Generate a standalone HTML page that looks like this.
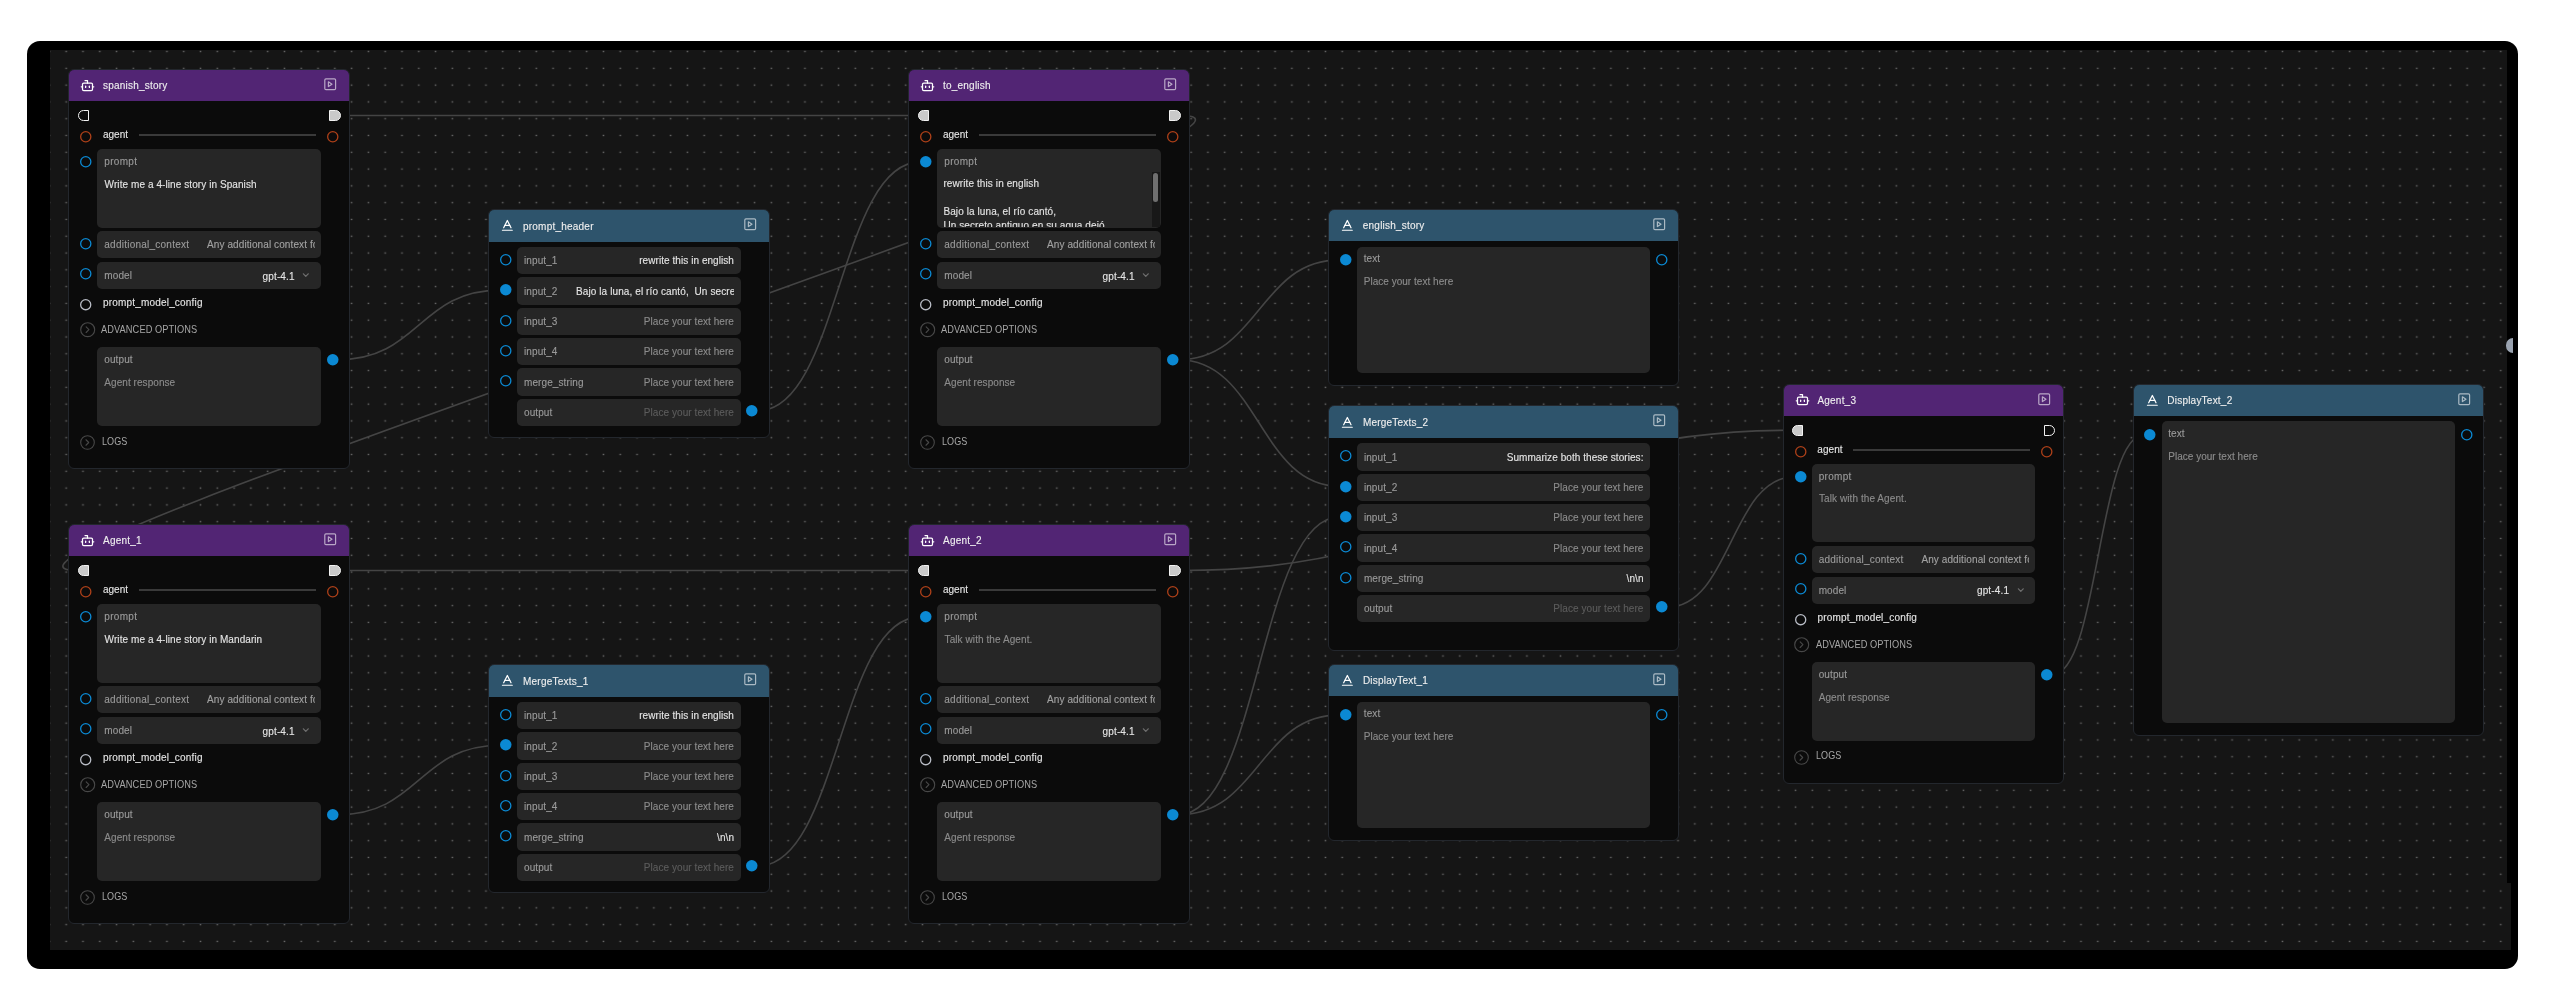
<!DOCTYPE html>
<html><head><meta charset="utf-8">
<style>
html,body{margin:0;padding:0;background:#ffffff;width:2563px;height:1000px;overflow:hidden;}
body{position:relative;font-family:"Liberation Sans", sans-serif;}
#wrap{position:absolute;left:0;top:0;width:2563px;height:1000px;will-change:transform;}
#frame{position:absolute;left:27px;top:41px;width:2491px;height:928px;background:#000;border-radius:13px;}
.t{position:absolute;white-space:nowrap;-webkit-text-stroke:0.12px currentColor;}
.hc{position:absolute;border-radius:50%;}
.bx{position:absolute;background:#262626;}
.ic{position:absolute;overflow:visible;}
.fh{position:absolute;border:1px solid #f2f2f2;}
.hd{position:absolute;border-radius:5px 5px 0 0;}
.nd{position:absolute;background:#0b0b0b;border:1px solid #23272d;border-radius:6px;}
.ln{position:absolute;background:#3a3a3a;}
.clip{position:absolute;overflow:hidden;}
.edges{position:absolute;left:0;top:0;}
</style></head><body><div id="wrap">
<div id="frame"></div>
<svg width="2563" height="1000" style="position:absolute;left:0;top:0">
<defs><pattern id="dots" patternUnits="userSpaceOnUse" width="16.79" height="16.79" x="41.0" y="43.2">
<rect x="7.6" y="7.7" width="1.6" height="1.3" fill="#6a6a6a"/></pattern></defs>
<rect x="50" y="50" width="2457" height="900" fill="#151515"/>
<rect x="2507" y="883" width="4" height="67" fill="#151515"/>
<rect x="50" y="50" width="2457" height="900" fill="url(#dots)"/>
<rect x="2507" y="883" width="4" height="67" fill="url(#dots)"/>
</svg>
<svg class="edges" width="2563" height="1000" viewBox="0 0 2563 1000">
<path d="M340.6,115.5 C629.2,115.5 629.1,115.5 917.7,115.5" fill="none" stroke="#444444" stroke-width="1.6"/>
<path d="M1180.6,115.5 C1356.7,115.5 -98.4,570.5 77.7,570.5" fill="none" stroke="#444444" stroke-width="1.6"/>
<path d="M338.2,359.7 C419.1,359.7 419.1,290.1 500.1,290.1" fill="none" stroke="#444444" stroke-width="1.6"/>
<path d="M757.8,410.9 C839.1,410.9 839.1,161.9 920.3,161.9" fill="none" stroke="#444444" stroke-width="1.6"/>
<path d="M1178.2,359.7 C1259.0,359.7 1259.0,259.9 1339.8,259.9" fill="none" stroke="#444444" stroke-width="1.6"/>
<path d="M1178.2,359.7 C1259.1,359.7 1259.1,486.4 1340.0,486.4" fill="none" stroke="#444444" stroke-width="1.6"/>
<path d="M340.6,570.5 C629.2,570.5 629.1,570.5 917.7,570.5" fill="none" stroke="#444444" stroke-width="1.6"/>
<path d="M1180.6,570.5 C1486.3,570.5 1486.3,430.3 1792.1,430.3" fill="none" stroke="#444444" stroke-width="1.6"/>
<path d="M338.2,814.7 C419.1,814.7 419.1,745.2 500.1,745.2" fill="none" stroke="#444444" stroke-width="1.6"/>
<path d="M757.8,866.0 C839.1,866.0 839.1,616.9 920.3,616.9" fill="none" stroke="#444444" stroke-width="1.6"/>
<path d="M1178.2,814.7 C1259.1,814.7 1259.1,516.7 1340.0,516.7" fill="none" stroke="#444444" stroke-width="1.6"/>
<path d="M1178.2,814.7 C1259.1,814.7 1259.1,714.9 1339.9,714.9" fill="none" stroke="#444444" stroke-width="1.6"/>
<path d="M1667.3,607.2 C1731.0,607.2 1731.0,476.7 1794.7,476.7" fill="none" stroke="#444444" stroke-width="1.6"/>
<path d="M2052.6,674.5 C2098.4,674.5 2098.4,434.5 2144.3,434.5" fill="none" stroke="#444444" stroke-width="1.6"/>
</svg>
<div class="nd" style="left:68.20px;top:68.80px;width:279.60px;height:398.10px;"></div>
<div class="hd" style="left:69.20px;top:69.80px;width:279.60px;height:31.30px;background:#522574;"></div>
<svg class="ic" style="left:80.30px;top:77.60px;" width="15" height="15" viewBox="0 0 24 24" fill="none" stroke="#ffffff" stroke-width="2" stroke-linecap="round" stroke-linejoin="round"><path d="M12 8V4H8"/><rect width="16" height="12" x="4" y="8" rx="2"/><path d="M2 14h2"/><path d="M20 14h2"/><path d="M15 13v2"/><path d="M9 13v2"/></svg>
<div class="t" style="left:103.00px;top:79.28px;height:14px;line-height:14px;color:#efefef;font-size:10px;letter-spacing:0.22px;">spanish_story</div>
<svg class="ic" style="left:322.50px;top:76.80px;" width="14.4" height="14.4" viewBox="0 0 24 24" fill="none" stroke="rgba(255,255,255,0.6)" stroke-width="2" stroke-linecap="round" stroke-linejoin="round"><rect width="18" height="18" x="3" y="3" rx="2"/><path d="m9 8 6 4-6 4Z"/></svg>
<div class="fh" style="left:77.70px;top:109.80px;width:9.20px;height:9.40px;background:#0b0b0b;border-radius:5.7px 0 0 5.7px;"></div>
<div class="fh" style="left:329.40px;top:109.80px;width:9.20px;height:9.40px;background:#c9c9c9;border-radius:0 5.7px 5.7px 0;"></div>
<svg class="ic" style="left:78.25px;top:128.75px;" width="15.5" height="15.5"><circle cx="7.75" cy="7.75" r="5.100" fill="none" stroke="#ad4019" stroke-width="1.3"/></svg>
<div class="t" style="left:102.90px;top:128.28px;height:14px;line-height:14px;color:#e4e4e4;font-size:10px;letter-spacing:0.05px;">agent</div>
<div class="ln" style="left:138.90px;top:134.30px;width:177.2px;height:1.5px;"></div>
<svg class="ic" style="left:324.60px;top:128.75px;" width="15.5" height="15.5"><circle cx="7.75" cy="7.75" r="5.100" fill="none" stroke="#ad4019" stroke-width="1.3"/></svg>
<div class="bx" style="left:97.30px;top:149.10px;width:223.60px;height:78.50px;border-radius:5px;"></div>
<svg class="ic" style="left:78.25px;top:154.15px;" width="15.5" height="15.5"><circle cx="7.75" cy="7.75" r="5.100" fill="none" stroke="#0b89d3" stroke-width="1.3"/></svg>
<div class="t" style="left:104.30px;top:154.88px;height:14px;line-height:14px;color:#9a9a9a;font-size:10px;letter-spacing:0.3px;">prompt</div>
<div class="t" style="left:104.60px;top:177.58px;height:14px;line-height:14px;color:#e4e4e4;font-size:10px;letter-spacing:0.08px;">Write me a 4-line story in Spanish</div>
<div class="bx" style="left:97.30px;top:231.20px;width:223.60px;height:27.00px;border-radius:5px;"></div>
<svg class="ic" style="left:78.25px;top:236.35px;" width="15.5" height="15.5"><circle cx="7.75" cy="7.75" r="5.100" fill="none" stroke="#0b89d3" stroke-width="1.3"/></svg>
<div class="t" style="left:104.30px;top:238.38px;height:14px;line-height:14px;color:#9a9a9a;font-size:10px;letter-spacing:0.24px;">additional_context</div>
<div class="clip" style="left:207.00px;top:231.20px;width:108px;height:27px;"><div class="t" style="left:0;top:7.25px;height:14px;line-height:14px;color:#a2a2a2;font-size:10px;letter-spacing:0.1px;">Any additional context for the agent</div></div>
<div class="bx" style="left:97.30px;top:261.80px;width:223.60px;height:27.00px;border-radius:5px;"></div>
<svg class="ic" style="left:78.25px;top:266.45px;" width="15.5" height="15.5"><circle cx="7.75" cy="7.75" r="5.100" fill="none" stroke="#0b89d3" stroke-width="1.3"/></svg>
<div class="t" style="left:104.30px;top:269.39px;height:14px;line-height:14px;color:#9a9a9a;font-size:10px;letter-spacing:0.1px;">model</div>
<div class="t" style="left:194.70px;top:269.59px;height:14px;line-height:14px;color:#e4e4e4;font-size:10px;letter-spacing:0.14px;width:100.00px;text-align:right;">gpt-4.1</div>
<svg class="ic" style="left:302.20px;top:271.80px;" width="8" height="6"><path d="M1.4 1.8 3.8 4.4 6.2 1.8" fill="none" stroke="#6e6e6e" stroke-width="1.25" stroke-linecap="round" stroke-linejoin="round"/></svg>
<svg class="ic" style="left:78.10px;top:296.90px;" width="15.4" height="15.4"><circle cx="7.7" cy="7.7" r="5.050" fill="none" stroke="#b9bdc6" stroke-width="1.3"/></svg>
<div class="t" style="left:103.05px;top:296.49px;height:14px;line-height:14px;color:#e4e4e4;font-size:10px;letter-spacing:0.18px;">prompt_model_config</div>
<svg class="ic" style="left:79.60px;top:321.90px;" width="15.4" height="15.4" viewBox="0 0 24 24" fill="none" stroke="#484848" stroke-width="1.75" stroke-linecap="round" stroke-linejoin="round"><circle cx="12" cy="12" r="10.9"/><path d="M9.6 7.6 13.9 12 9.6 16.4"/></svg>
<div class="t" style="left:101.40px;top:322.95px;height:14px;line-height:14px;color:#a6a6a6;font-size:10.4px;letter-spacing:0.1px;-webkit-text-stroke:0;transform:scaleX(0.89);transform-origin:0 0;">ADVANCED OPTIONS</div>
<div class="bx" style="left:97.30px;top:347.20px;width:223.60px;height:78.60px;border-radius:5px;"></div>
<div class="t" style="left:104.30px;top:352.99px;height:14px;line-height:14px;color:#9a9a9a;font-size:10px;letter-spacing:0.1px;">output</div>
<div class="t" style="left:104.30px;top:376.09px;height:14px;line-height:14px;color:#8c8c8c;font-size:10px;letter-spacing:0.06px;">Agent response</div>
<svg class="ic" style="left:324.75px;top:351.95px;" width="15.5" height="15.5"><circle cx="7.75" cy="7.75" r="5.75" fill="#0b89d3"/></svg>
<svg class="ic" style="left:79.80px;top:434.70px;" width="15.0" height="15.0" viewBox="0 0 24 24" fill="none" stroke="#484848" stroke-width="1.75" stroke-linecap="round" stroke-linejoin="round"><circle cx="12" cy="12" r="10.9"/><path d="M9.6 7.6 13.9 12 9.6 16.4"/></svg>
<div class="t" style="left:101.70px;top:434.65px;height:14px;line-height:14px;color:#a6a6a6;font-size:10.4px;letter-spacing:0.1px;-webkit-text-stroke:0;transform:scaleX(0.87);transform-origin:0 0;">LOGS</div>
<div class="nd" style="left:908.20px;top:68.80px;width:279.60px;height:398.10px;"></div>
<div class="hd" style="left:909.20px;top:69.80px;width:279.60px;height:31.30px;background:#522574;"></div>
<svg class="ic" style="left:920.30px;top:77.60px;" width="15" height="15" viewBox="0 0 24 24" fill="none" stroke="#ffffff" stroke-width="2" stroke-linecap="round" stroke-linejoin="round"><path d="M12 8V4H8"/><rect width="16" height="12" x="4" y="8" rx="2"/><path d="M2 14h2"/><path d="M20 14h2"/><path d="M15 13v2"/><path d="M9 13v2"/></svg>
<div class="t" style="left:943.00px;top:79.28px;height:14px;line-height:14px;color:#efefef;font-size:10px;letter-spacing:0.22px;">to_english</div>
<svg class="ic" style="left:1162.50px;top:76.80px;" width="14.4" height="14.4" viewBox="0 0 24 24" fill="none" stroke="rgba(255,255,255,0.6)" stroke-width="2" stroke-linecap="round" stroke-linejoin="round"><rect width="18" height="18" x="3" y="3" rx="2"/><path d="m9 8 6 4-6 4Z"/></svg>
<div class="fh" style="left:917.70px;top:109.80px;width:9.20px;height:9.40px;background:#c9c9c9;border-radius:5.7px 0 0 5.7px;"></div>
<div class="fh" style="left:1169.40px;top:109.80px;width:9.20px;height:9.40px;background:#c9c9c9;border-radius:0 5.7px 5.7px 0;"></div>
<svg class="ic" style="left:918.25px;top:128.75px;" width="15.5" height="15.5"><circle cx="7.75" cy="7.75" r="5.100" fill="none" stroke="#ad4019" stroke-width="1.3"/></svg>
<div class="t" style="left:942.90px;top:128.28px;height:14px;line-height:14px;color:#e4e4e4;font-size:10px;letter-spacing:0.05px;">agent</div>
<div class="ln" style="left:978.90px;top:134.30px;width:177.2px;height:1.5px;"></div>
<svg class="ic" style="left:1164.60px;top:128.75px;" width="15.5" height="15.5"><circle cx="7.75" cy="7.75" r="5.100" fill="none" stroke="#ad4019" stroke-width="1.3"/></svg>
<div class="bx" style="left:937.30px;top:149.10px;width:223.60px;height:78.50px;border-radius:5px;"></div>
<svg class="ic" style="left:918.25px;top:154.15px;" width="15.5" height="15.5"><circle cx="7.75" cy="7.75" r="5.75" fill="#0b89d3"/></svg>
<div class="t" style="left:944.30px;top:154.88px;height:14px;line-height:14px;color:#9a9a9a;font-size:10px;letter-spacing:0.3px;">prompt</div>
<div class="clip" style="left:937.30px;top:172.00px;width:214px;height:54.8px;">
<div class="t" style="left:6.1px;top:5.38px;height:14px;line-height:14px;color:#e4e4e4;font-size:10px;letter-spacing:0.1px;">rewrite this in english</div>
<div class="t" style="left:6.1px;top:19.18px;height:14px;line-height:14px;color:#e4e4e4;font-size:10px;letter-spacing:0.1px;"></div>
<div class="t" style="left:6.1px;top:32.99px;height:14px;line-height:14px;color:#e4e4e4;font-size:10px;letter-spacing:0.1px;">Bajo la luna, el río cantó,</div>
<div class="t" style="left:6.1px;top:46.79px;height:14px;line-height:14px;color:#e4e4e4;font-size:10px;letter-spacing:0.1px;">Un secreto antiguo en su agua dejó,</div>
</div>
<div style="position:absolute;left:1152.00px;top:172.00px;width:7.7px;height:54.8px;background:#181818;"></div>
<div style="position:absolute;left:1153.20px;top:173.40px;width:5.1px;height:28.6px;background:#6f6f6f;border-radius:3px;"></div>
<div class="bx" style="left:937.30px;top:231.20px;width:223.60px;height:27.00px;border-radius:5px;"></div>
<svg class="ic" style="left:918.25px;top:236.35px;" width="15.5" height="15.5"><circle cx="7.75" cy="7.75" r="5.100" fill="none" stroke="#0b89d3" stroke-width="1.3"/></svg>
<div class="t" style="left:944.30px;top:238.38px;height:14px;line-height:14px;color:#9a9a9a;font-size:10px;letter-spacing:0.24px;">additional_context</div>
<div class="clip" style="left:1047.00px;top:231.20px;width:108px;height:27px;"><div class="t" style="left:0;top:7.25px;height:14px;line-height:14px;color:#a2a2a2;font-size:10px;letter-spacing:0.1px;">Any additional context for the agent</div></div>
<div class="bx" style="left:937.30px;top:261.80px;width:223.60px;height:27.00px;border-radius:5px;"></div>
<svg class="ic" style="left:918.25px;top:266.45px;" width="15.5" height="15.5"><circle cx="7.75" cy="7.75" r="5.100" fill="none" stroke="#0b89d3" stroke-width="1.3"/></svg>
<div class="t" style="left:944.30px;top:269.39px;height:14px;line-height:14px;color:#9a9a9a;font-size:10px;letter-spacing:0.1px;">model</div>
<div class="t" style="left:1034.70px;top:269.59px;height:14px;line-height:14px;color:#e4e4e4;font-size:10px;letter-spacing:0.14px;width:100.00px;text-align:right;">gpt-4.1</div>
<svg class="ic" style="left:1142.20px;top:271.80px;" width="8" height="6"><path d="M1.4 1.8 3.8 4.4 6.2 1.8" fill="none" stroke="#6e6e6e" stroke-width="1.25" stroke-linecap="round" stroke-linejoin="round"/></svg>
<svg class="ic" style="left:918.10px;top:296.90px;" width="15.4" height="15.4"><circle cx="7.7" cy="7.7" r="5.050" fill="none" stroke="#b9bdc6" stroke-width="1.3"/></svg>
<div class="t" style="left:943.05px;top:296.49px;height:14px;line-height:14px;color:#e4e4e4;font-size:10px;letter-spacing:0.18px;">prompt_model_config</div>
<svg class="ic" style="left:919.60px;top:321.90px;" width="15.4" height="15.4" viewBox="0 0 24 24" fill="none" stroke="#484848" stroke-width="1.75" stroke-linecap="round" stroke-linejoin="round"><circle cx="12" cy="12" r="10.9"/><path d="M9.6 7.6 13.9 12 9.6 16.4"/></svg>
<div class="t" style="left:941.40px;top:322.95px;height:14px;line-height:14px;color:#a6a6a6;font-size:10.4px;letter-spacing:0.1px;-webkit-text-stroke:0;transform:scaleX(0.89);transform-origin:0 0;">ADVANCED OPTIONS</div>
<div class="bx" style="left:937.30px;top:347.20px;width:223.60px;height:78.60px;border-radius:5px;"></div>
<div class="t" style="left:944.30px;top:352.99px;height:14px;line-height:14px;color:#9a9a9a;font-size:10px;letter-spacing:0.1px;">output</div>
<div class="t" style="left:944.30px;top:376.09px;height:14px;line-height:14px;color:#8c8c8c;font-size:10px;letter-spacing:0.06px;">Agent response</div>
<svg class="ic" style="left:1164.75px;top:351.95px;" width="15.5" height="15.5"><circle cx="7.75" cy="7.75" r="5.75" fill="#0b89d3"/></svg>
<svg class="ic" style="left:919.80px;top:434.70px;" width="15.0" height="15.0" viewBox="0 0 24 24" fill="none" stroke="#484848" stroke-width="1.75" stroke-linecap="round" stroke-linejoin="round"><circle cx="12" cy="12" r="10.9"/><path d="M9.6 7.6 13.9 12 9.6 16.4"/></svg>
<div class="t" style="left:941.70px;top:434.65px;height:14px;line-height:14px;color:#a6a6a6;font-size:10.4px;letter-spacing:0.1px;-webkit-text-stroke:0;transform:scaleX(0.87);transform-origin:0 0;">LOGS</div>
<div class="nd" style="left:68.20px;top:523.80px;width:279.60px;height:398.10px;"></div>
<div class="hd" style="left:69.20px;top:524.80px;width:279.60px;height:31.30px;background:#522574;"></div>
<svg class="ic" style="left:80.30px;top:532.60px;" width="15" height="15" viewBox="0 0 24 24" fill="none" stroke="#ffffff" stroke-width="2" stroke-linecap="round" stroke-linejoin="round"><path d="M12 8V4H8"/><rect width="16" height="12" x="4" y="8" rx="2"/><path d="M2 14h2"/><path d="M20 14h2"/><path d="M15 13v2"/><path d="M9 13v2"/></svg>
<div class="t" style="left:103.00px;top:534.28px;height:14px;line-height:14px;color:#efefef;font-size:10px;letter-spacing:0.22px;">Agent_1</div>
<svg class="ic" style="left:322.50px;top:531.80px;" width="14.4" height="14.4" viewBox="0 0 24 24" fill="none" stroke="rgba(255,255,255,0.6)" stroke-width="2" stroke-linecap="round" stroke-linejoin="round"><rect width="18" height="18" x="3" y="3" rx="2"/><path d="m9 8 6 4-6 4Z"/></svg>
<div class="fh" style="left:77.70px;top:564.80px;width:9.20px;height:9.40px;background:#c9c9c9;border-radius:5.7px 0 0 5.7px;"></div>
<div class="fh" style="left:329.40px;top:564.80px;width:9.20px;height:9.40px;background:#c9c9c9;border-radius:0 5.7px 5.7px 0;"></div>
<svg class="ic" style="left:78.25px;top:583.75px;" width="15.5" height="15.5"><circle cx="7.75" cy="7.75" r="5.100" fill="none" stroke="#ad4019" stroke-width="1.3"/></svg>
<div class="t" style="left:102.90px;top:583.28px;height:14px;line-height:14px;color:#e4e4e4;font-size:10px;letter-spacing:0.05px;">agent</div>
<div class="ln" style="left:138.90px;top:589.30px;width:177.2px;height:1.5px;"></div>
<svg class="ic" style="left:324.60px;top:583.75px;" width="15.5" height="15.5"><circle cx="7.75" cy="7.75" r="5.100" fill="none" stroke="#ad4019" stroke-width="1.3"/></svg>
<div class="bx" style="left:97.30px;top:604.10px;width:223.60px;height:78.50px;border-radius:5px;"></div>
<svg class="ic" style="left:78.25px;top:609.15px;" width="15.5" height="15.5"><circle cx="7.75" cy="7.75" r="5.100" fill="none" stroke="#0b89d3" stroke-width="1.3"/></svg>
<div class="t" style="left:104.30px;top:609.88px;height:14px;line-height:14px;color:#9a9a9a;font-size:10px;letter-spacing:0.3px;">prompt</div>
<div class="t" style="left:104.60px;top:632.58px;height:14px;line-height:14px;color:#e4e4e4;font-size:10px;letter-spacing:0.08px;">Write me a 4-line story in Mandarin</div>
<div class="bx" style="left:97.30px;top:686.20px;width:223.60px;height:27.00px;border-radius:5px;"></div>
<svg class="ic" style="left:78.25px;top:691.35px;" width="15.5" height="15.5"><circle cx="7.75" cy="7.75" r="5.100" fill="none" stroke="#0b89d3" stroke-width="1.3"/></svg>
<div class="t" style="left:104.30px;top:693.38px;height:14px;line-height:14px;color:#9a9a9a;font-size:10px;letter-spacing:0.24px;">additional_context</div>
<div class="clip" style="left:207.00px;top:686.20px;width:108px;height:27px;"><div class="t" style="left:0;top:7.25px;height:14px;line-height:14px;color:#a2a2a2;font-size:10px;letter-spacing:0.1px;">Any additional context for the agent</div></div>
<div class="bx" style="left:97.30px;top:716.80px;width:223.60px;height:27.00px;border-radius:5px;"></div>
<svg class="ic" style="left:78.25px;top:721.45px;" width="15.5" height="15.5"><circle cx="7.75" cy="7.75" r="5.100" fill="none" stroke="#0b89d3" stroke-width="1.3"/></svg>
<div class="t" style="left:104.30px;top:724.38px;height:14px;line-height:14px;color:#9a9a9a;font-size:10px;letter-spacing:0.1px;">model</div>
<div class="t" style="left:194.70px;top:724.58px;height:14px;line-height:14px;color:#e4e4e4;font-size:10px;letter-spacing:0.14px;width:100.00px;text-align:right;">gpt-4.1</div>
<svg class="ic" style="left:302.20px;top:726.80px;" width="8" height="6"><path d="M1.4 1.8 3.8 4.4 6.2 1.8" fill="none" stroke="#6e6e6e" stroke-width="1.25" stroke-linecap="round" stroke-linejoin="round"/></svg>
<svg class="ic" style="left:78.10px;top:751.90px;" width="15.4" height="15.4"><circle cx="7.7" cy="7.7" r="5.050" fill="none" stroke="#b9bdc6" stroke-width="1.3"/></svg>
<div class="t" style="left:103.05px;top:751.48px;height:14px;line-height:14px;color:#e4e4e4;font-size:10px;letter-spacing:0.18px;">prompt_model_config</div>
<svg class="ic" style="left:79.60px;top:776.90px;" width="15.4" height="15.4" viewBox="0 0 24 24" fill="none" stroke="#484848" stroke-width="1.75" stroke-linecap="round" stroke-linejoin="round"><circle cx="12" cy="12" r="10.9"/><path d="M9.6 7.6 13.9 12 9.6 16.4"/></svg>
<div class="t" style="left:101.40px;top:777.95px;height:14px;line-height:14px;color:#a6a6a6;font-size:10.4px;letter-spacing:0.1px;-webkit-text-stroke:0;transform:scaleX(0.89);transform-origin:0 0;">ADVANCED OPTIONS</div>
<div class="bx" style="left:97.30px;top:802.20px;width:223.60px;height:78.60px;border-radius:5px;"></div>
<div class="t" style="left:104.30px;top:807.98px;height:14px;line-height:14px;color:#9a9a9a;font-size:10px;letter-spacing:0.1px;">output</div>
<div class="t" style="left:104.30px;top:831.08px;height:14px;line-height:14px;color:#8c8c8c;font-size:10px;letter-spacing:0.06px;">Agent response</div>
<svg class="ic" style="left:324.75px;top:806.95px;" width="15.5" height="15.5"><circle cx="7.75" cy="7.75" r="5.75" fill="#0b89d3"/></svg>
<svg class="ic" style="left:79.80px;top:889.70px;" width="15.0" height="15.0" viewBox="0 0 24 24" fill="none" stroke="#484848" stroke-width="1.75" stroke-linecap="round" stroke-linejoin="round"><circle cx="12" cy="12" r="10.9"/><path d="M9.6 7.6 13.9 12 9.6 16.4"/></svg>
<div class="t" style="left:101.70px;top:889.65px;height:14px;line-height:14px;color:#a6a6a6;font-size:10.4px;letter-spacing:0.1px;-webkit-text-stroke:0;transform:scaleX(0.87);transform-origin:0 0;">LOGS</div>
<div class="nd" style="left:908.20px;top:523.80px;width:279.60px;height:398.10px;"></div>
<div class="hd" style="left:909.20px;top:524.80px;width:279.60px;height:31.30px;background:#522574;"></div>
<svg class="ic" style="left:920.30px;top:532.60px;" width="15" height="15" viewBox="0 0 24 24" fill="none" stroke="#ffffff" stroke-width="2" stroke-linecap="round" stroke-linejoin="round"><path d="M12 8V4H8"/><rect width="16" height="12" x="4" y="8" rx="2"/><path d="M2 14h2"/><path d="M20 14h2"/><path d="M15 13v2"/><path d="M9 13v2"/></svg>
<div class="t" style="left:943.00px;top:534.28px;height:14px;line-height:14px;color:#efefef;font-size:10px;letter-spacing:0.22px;">Agent_2</div>
<svg class="ic" style="left:1162.50px;top:531.80px;" width="14.4" height="14.4" viewBox="0 0 24 24" fill="none" stroke="rgba(255,255,255,0.6)" stroke-width="2" stroke-linecap="round" stroke-linejoin="round"><rect width="18" height="18" x="3" y="3" rx="2"/><path d="m9 8 6 4-6 4Z"/></svg>
<div class="fh" style="left:917.70px;top:564.80px;width:9.20px;height:9.40px;background:#c9c9c9;border-radius:5.7px 0 0 5.7px;"></div>
<div class="fh" style="left:1169.40px;top:564.80px;width:9.20px;height:9.40px;background:#c9c9c9;border-radius:0 5.7px 5.7px 0;"></div>
<svg class="ic" style="left:918.25px;top:583.75px;" width="15.5" height="15.5"><circle cx="7.75" cy="7.75" r="5.100" fill="none" stroke="#ad4019" stroke-width="1.3"/></svg>
<div class="t" style="left:942.90px;top:583.28px;height:14px;line-height:14px;color:#e4e4e4;font-size:10px;letter-spacing:0.05px;">agent</div>
<div class="ln" style="left:978.90px;top:589.30px;width:177.2px;height:1.5px;"></div>
<svg class="ic" style="left:1164.60px;top:583.75px;" width="15.5" height="15.5"><circle cx="7.75" cy="7.75" r="5.100" fill="none" stroke="#ad4019" stroke-width="1.3"/></svg>
<div class="bx" style="left:937.30px;top:604.10px;width:223.60px;height:78.50px;border-radius:5px;"></div>
<svg class="ic" style="left:918.25px;top:609.15px;" width="15.5" height="15.5"><circle cx="7.75" cy="7.75" r="5.75" fill="#0b89d3"/></svg>
<div class="t" style="left:944.30px;top:609.88px;height:14px;line-height:14px;color:#9a9a9a;font-size:10px;letter-spacing:0.3px;">prompt</div>
<div class="t" style="left:944.60px;top:632.58px;height:14px;line-height:14px;color:#8c8c8c;font-size:10px;letter-spacing:0.08px;">Talk with the Agent.</div>
<div class="bx" style="left:937.30px;top:686.20px;width:223.60px;height:27.00px;border-radius:5px;"></div>
<svg class="ic" style="left:918.25px;top:691.35px;" width="15.5" height="15.5"><circle cx="7.75" cy="7.75" r="5.100" fill="none" stroke="#0b89d3" stroke-width="1.3"/></svg>
<div class="t" style="left:944.30px;top:693.38px;height:14px;line-height:14px;color:#9a9a9a;font-size:10px;letter-spacing:0.24px;">additional_context</div>
<div class="clip" style="left:1047.00px;top:686.20px;width:108px;height:27px;"><div class="t" style="left:0;top:7.25px;height:14px;line-height:14px;color:#a2a2a2;font-size:10px;letter-spacing:0.1px;">Any additional context for the agent</div></div>
<div class="bx" style="left:937.30px;top:716.80px;width:223.60px;height:27.00px;border-radius:5px;"></div>
<svg class="ic" style="left:918.25px;top:721.45px;" width="15.5" height="15.5"><circle cx="7.75" cy="7.75" r="5.100" fill="none" stroke="#0b89d3" stroke-width="1.3"/></svg>
<div class="t" style="left:944.30px;top:724.38px;height:14px;line-height:14px;color:#9a9a9a;font-size:10px;letter-spacing:0.1px;">model</div>
<div class="t" style="left:1034.70px;top:724.58px;height:14px;line-height:14px;color:#e4e4e4;font-size:10px;letter-spacing:0.14px;width:100.00px;text-align:right;">gpt-4.1</div>
<svg class="ic" style="left:1142.20px;top:726.80px;" width="8" height="6"><path d="M1.4 1.8 3.8 4.4 6.2 1.8" fill="none" stroke="#6e6e6e" stroke-width="1.25" stroke-linecap="round" stroke-linejoin="round"/></svg>
<svg class="ic" style="left:918.10px;top:751.90px;" width="15.4" height="15.4"><circle cx="7.7" cy="7.7" r="5.050" fill="none" stroke="#b9bdc6" stroke-width="1.3"/></svg>
<div class="t" style="left:943.05px;top:751.48px;height:14px;line-height:14px;color:#e4e4e4;font-size:10px;letter-spacing:0.18px;">prompt_model_config</div>
<svg class="ic" style="left:919.60px;top:776.90px;" width="15.4" height="15.4" viewBox="0 0 24 24" fill="none" stroke="#484848" stroke-width="1.75" stroke-linecap="round" stroke-linejoin="round"><circle cx="12" cy="12" r="10.9"/><path d="M9.6 7.6 13.9 12 9.6 16.4"/></svg>
<div class="t" style="left:941.40px;top:777.95px;height:14px;line-height:14px;color:#a6a6a6;font-size:10.4px;letter-spacing:0.1px;-webkit-text-stroke:0;transform:scaleX(0.89);transform-origin:0 0;">ADVANCED OPTIONS</div>
<div class="bx" style="left:937.30px;top:802.20px;width:223.60px;height:78.60px;border-radius:5px;"></div>
<div class="t" style="left:944.30px;top:807.98px;height:14px;line-height:14px;color:#9a9a9a;font-size:10px;letter-spacing:0.1px;">output</div>
<div class="t" style="left:944.30px;top:831.08px;height:14px;line-height:14px;color:#8c8c8c;font-size:10px;letter-spacing:0.06px;">Agent response</div>
<svg class="ic" style="left:1164.75px;top:806.95px;" width="15.5" height="15.5"><circle cx="7.75" cy="7.75" r="5.75" fill="#0b89d3"/></svg>
<svg class="ic" style="left:919.80px;top:889.70px;" width="15.0" height="15.0" viewBox="0 0 24 24" fill="none" stroke="#484848" stroke-width="1.75" stroke-linecap="round" stroke-linejoin="round"><circle cx="12" cy="12" r="10.9"/><path d="M9.6 7.6 13.9 12 9.6 16.4"/></svg>
<div class="t" style="left:941.70px;top:889.65px;height:14px;line-height:14px;color:#a6a6a6;font-size:10.4px;letter-spacing:0.1px;-webkit-text-stroke:0;transform:scaleX(0.87);transform-origin:0 0;">LOGS</div>
<div class="nd" style="left:1782.60px;top:383.60px;width:279.60px;height:398.10px;"></div>
<div class="hd" style="left:1783.60px;top:384.60px;width:279.60px;height:31.30px;background:#522574;"></div>
<svg class="ic" style="left:1794.70px;top:392.40px;" width="15" height="15" viewBox="0 0 24 24" fill="none" stroke="#ffffff" stroke-width="2" stroke-linecap="round" stroke-linejoin="round"><path d="M12 8V4H8"/><rect width="16" height="12" x="4" y="8" rx="2"/><path d="M2 14h2"/><path d="M20 14h2"/><path d="M15 13v2"/><path d="M9 13v2"/></svg>
<div class="t" style="left:1817.40px;top:394.09px;height:14px;line-height:14px;color:#efefef;font-size:10px;letter-spacing:0.22px;">Agent_3</div>
<svg class="ic" style="left:2036.90px;top:391.60px;" width="14.4" height="14.4" viewBox="0 0 24 24" fill="none" stroke="rgba(255,255,255,0.6)" stroke-width="2" stroke-linecap="round" stroke-linejoin="round"><rect width="18" height="18" x="3" y="3" rx="2"/><path d="m9 8 6 4-6 4Z"/></svg>
<div class="fh" style="left:1792.10px;top:424.60px;width:9.20px;height:9.40px;background:#c9c9c9;border-radius:5.7px 0 0 5.7px;"></div>
<div class="fh" style="left:2043.80px;top:424.60px;width:9.20px;height:9.40px;background:#0b0b0b;border-radius:0 5.7px 5.7px 0;"></div>
<svg class="ic" style="left:1792.65px;top:443.55px;" width="15.5" height="15.5"><circle cx="7.75" cy="7.75" r="5.100" fill="none" stroke="#ad4019" stroke-width="1.3"/></svg>
<div class="t" style="left:1817.30px;top:443.09px;height:14px;line-height:14px;color:#e4e4e4;font-size:10px;letter-spacing:0.05px;">agent</div>
<div class="ln" style="left:1853.30px;top:449.10px;width:177.2px;height:1.5px;"></div>
<svg class="ic" style="left:2039.00px;top:443.55px;" width="15.5" height="15.5"><circle cx="7.75" cy="7.75" r="5.100" fill="none" stroke="#ad4019" stroke-width="1.3"/></svg>
<div class="bx" style="left:1811.70px;top:463.90px;width:223.60px;height:78.50px;border-radius:5px;"></div>
<svg class="ic" style="left:1792.65px;top:468.95px;" width="15.5" height="15.5"><circle cx="7.75" cy="7.75" r="5.75" fill="#0b89d3"/></svg>
<div class="t" style="left:1818.70px;top:469.69px;height:14px;line-height:14px;color:#9a9a9a;font-size:10px;letter-spacing:0.3px;">prompt</div>
<div class="t" style="left:1819.00px;top:492.39px;height:14px;line-height:14px;color:#8c8c8c;font-size:10px;letter-spacing:0.08px;">Talk with the Agent.</div>
<div class="bx" style="left:1811.70px;top:546.00px;width:223.60px;height:27.00px;border-radius:5px;"></div>
<svg class="ic" style="left:1792.65px;top:551.15px;" width="15.5" height="15.5"><circle cx="7.75" cy="7.75" r="5.100" fill="none" stroke="#0b89d3" stroke-width="1.3"/></svg>
<div class="t" style="left:1818.70px;top:553.18px;height:14px;line-height:14px;color:#9a9a9a;font-size:10px;letter-spacing:0.24px;">additional_context</div>
<div class="clip" style="left:1921.40px;top:546.00px;width:108px;height:27px;"><div class="t" style="left:0;top:7.25px;height:14px;line-height:14px;color:#a2a2a2;font-size:10px;letter-spacing:0.1px;">Any additional context for the agent</div></div>
<div class="bx" style="left:1811.70px;top:576.60px;width:223.60px;height:27.00px;border-radius:5px;"></div>
<svg class="ic" style="left:1792.65px;top:581.25px;" width="15.5" height="15.5"><circle cx="7.75" cy="7.75" r="5.100" fill="none" stroke="#0b89d3" stroke-width="1.3"/></svg>
<div class="t" style="left:1818.70px;top:584.18px;height:14px;line-height:14px;color:#9a9a9a;font-size:10px;letter-spacing:0.1px;">model</div>
<div class="t" style="left:1909.10px;top:584.38px;height:14px;line-height:14px;color:#e4e4e4;font-size:10px;letter-spacing:0.14px;width:100.00px;text-align:right;">gpt-4.1</div>
<svg class="ic" style="left:2016.60px;top:586.60px;" width="8" height="6"><path d="M1.4 1.8 3.8 4.4 6.2 1.8" fill="none" stroke="#6e6e6e" stroke-width="1.25" stroke-linecap="round" stroke-linejoin="round"/></svg>
<svg class="ic" style="left:1792.50px;top:611.70px;" width="15.4" height="15.4"><circle cx="7.7" cy="7.7" r="5.050" fill="none" stroke="#b9bdc6" stroke-width="1.3"/></svg>
<div class="t" style="left:1817.45px;top:611.29px;height:14px;line-height:14px;color:#e4e4e4;font-size:10px;letter-spacing:0.18px;">prompt_model_config</div>
<svg class="ic" style="left:1794.00px;top:636.70px;" width="15.4" height="15.4" viewBox="0 0 24 24" fill="none" stroke="#484848" stroke-width="1.75" stroke-linecap="round" stroke-linejoin="round"><circle cx="12" cy="12" r="10.9"/><path d="M9.6 7.6 13.9 12 9.6 16.4"/></svg>
<div class="t" style="left:1815.80px;top:637.75px;height:14px;line-height:14px;color:#a6a6a6;font-size:10.4px;letter-spacing:0.1px;-webkit-text-stroke:0;transform:scaleX(0.89);transform-origin:0 0;">ADVANCED OPTIONS</div>
<div class="bx" style="left:1811.70px;top:662.00px;width:223.60px;height:78.60px;border-radius:5px;"></div>
<div class="t" style="left:1818.70px;top:667.79px;height:14px;line-height:14px;color:#9a9a9a;font-size:10px;letter-spacing:0.1px;">output</div>
<div class="t" style="left:1818.70px;top:690.88px;height:14px;line-height:14px;color:#8c8c8c;font-size:10px;letter-spacing:0.06px;">Agent response</div>
<svg class="ic" style="left:2039.15px;top:666.75px;" width="15.5" height="15.5"><circle cx="7.75" cy="7.75" r="5.75" fill="#0b89d3"/></svg>
<svg class="ic" style="left:1794.20px;top:749.50px;" width="15.0" height="15.0" viewBox="0 0 24 24" fill="none" stroke="#484848" stroke-width="1.75" stroke-linecap="round" stroke-linejoin="round"><circle cx="12" cy="12" r="10.9"/><path d="M9.6 7.6 13.9 12 9.6 16.4"/></svg>
<div class="t" style="left:1816.10px;top:749.45px;height:14px;line-height:14px;color:#a6a6a6;font-size:10.4px;letter-spacing:0.1px;-webkit-text-stroke:0;transform:scaleX(0.87);transform-origin:0 0;">LOGS</div>
<div class="nd" style="left:488.30px;top:209.00px;width:279.60px;height:227.00px;"></div>
<div class="hd" style="left:489.30px;top:210.00px;width:279.60px;height:31.50px;background:#2e546c;"></div>
<svg class="ic" style="left:500.20px;top:218.20px;" width="14.7" height="14.7" viewBox="0 0 24 24" fill="none" stroke="#ffffff" stroke-width="2" stroke-linecap="round" stroke-linejoin="round"><path d="M4 20h16"/><path d="m6 16 6-12 6 12"/><path d="M8 12h8"/></svg>
<div class="t" style="left:523.00px;top:219.58px;height:14px;line-height:14px;color:#efefef;font-size:10px;letter-spacing:0.22px;">prompt_header</div>
<svg class="ic" style="left:742.60px;top:217.00px;" width="14.4" height="14.4" viewBox="0 0 24 24" fill="none" stroke="rgba(255,255,255,0.6)" stroke-width="2" stroke-linecap="round" stroke-linejoin="round"><rect width="18" height="18" x="3" y="3" rx="2"/><path d="m9 8 6 4-6 4Z"/></svg>
<div class="bx" style="left:517.00px;top:247.00px;width:223.90px;height:27.40px;border-radius:5px;"></div>
<svg class="ic" style="left:498.00px;top:252.00px;" width="15.5" height="15.5"><circle cx="7.75" cy="7.75" r="5.100" fill="none" stroke="#0b89d3" stroke-width="1.3"/></svg>
<div class="t" style="left:524.00px;top:254.38px;height:14px;line-height:14px;color:#9a9a9a;font-size:10px;letter-spacing:0.1px;">input_1</div>
<div class="t" style="left:574.00px;top:254.38px;height:14px;line-height:14px;color:#e4e4e4;font-size:10px;letter-spacing:0.06px;width:160.00px;text-align:right;">rewrite this in english</div>
<div class="bx" style="left:517.00px;top:277.32px;width:223.90px;height:27.40px;border-radius:5px;"></div>
<svg class="ic" style="left:498.00px;top:282.32px;" width="15.5" height="15.5"><circle cx="7.75" cy="7.75" r="5.75" fill="#0b89d3"/></svg>
<div class="t" style="left:524.00px;top:284.71px;height:14px;line-height:14px;color:#9a9a9a;font-size:10px;letter-spacing:0.1px;">input_2</div>
<div class="clip" style="left:576.00px;top:277.32px;width:158px;height:27px;"><div class="t" style="left:0;top:7.35px;height:14px;line-height:14px;color:#e4e4e4;font-size:10px;letter-spacing:0.1px;white-space:pre;">Bajo la luna, el río cantó,  Un secreto antiguo en su agua dejó</div></div>
<div class="bx" style="left:517.00px;top:307.64px;width:223.90px;height:27.40px;border-radius:5px;"></div>
<svg class="ic" style="left:498.00px;top:312.64px;" width="15.5" height="15.5"><circle cx="7.75" cy="7.75" r="5.100" fill="none" stroke="#0b89d3" stroke-width="1.3"/></svg>
<div class="t" style="left:524.00px;top:315.03px;height:14px;line-height:14px;color:#9a9a9a;font-size:10px;letter-spacing:0.1px;">input_3</div>
<div class="t" style="left:574.00px;top:315.03px;height:14px;line-height:14px;color:#8c8c8c;font-size:10px;letter-spacing:0.06px;width:160.00px;text-align:right;">Place your text here</div>
<div class="bx" style="left:517.00px;top:337.96px;width:223.90px;height:27.40px;border-radius:5px;"></div>
<svg class="ic" style="left:498.00px;top:342.96px;" width="15.5" height="15.5"><circle cx="7.75" cy="7.75" r="5.100" fill="none" stroke="#0b89d3" stroke-width="1.3"/></svg>
<div class="t" style="left:524.00px;top:345.35px;height:14px;line-height:14px;color:#9a9a9a;font-size:10px;letter-spacing:0.1px;">input_4</div>
<div class="t" style="left:574.00px;top:345.35px;height:14px;line-height:14px;color:#8c8c8c;font-size:10px;letter-spacing:0.06px;width:160.00px;text-align:right;">Place your text here</div>
<div class="bx" style="left:517.00px;top:368.28px;width:223.90px;height:27.40px;border-radius:5px;"></div>
<svg class="ic" style="left:498.00px;top:373.28px;" width="15.5" height="15.5"><circle cx="7.75" cy="7.75" r="5.100" fill="none" stroke="#0b89d3" stroke-width="1.3"/></svg>
<div class="t" style="left:524.00px;top:375.67px;height:14px;line-height:14px;color:#9a9a9a;font-size:10px;letter-spacing:0.1px;">merge_string</div>
<div class="t" style="left:574.00px;top:375.67px;height:14px;line-height:14px;color:#8c8c8c;font-size:10px;letter-spacing:0.06px;width:160.00px;text-align:right;">Place your text here</div>
<div class="bx" style="left:517.00px;top:398.60px;width:223.90px;height:27.40px;border-radius:5px;"></div>
<div class="t" style="left:524.00px;top:405.99px;height:14px;line-height:14px;color:#9a9a9a;font-size:10px;letter-spacing:0.1px;">output</div>
<div class="t" style="left:574.00px;top:405.99px;height:14px;line-height:14px;color:#5c5c5c;font-size:10px;letter-spacing:0.06px;width:160.00px;text-align:right;">Place your text here</div>
<svg class="ic" style="left:744.35px;top:403.15px;" width="15.5" height="15.5"><circle cx="7.75" cy="7.75" r="5.75" fill="#0b89d3"/></svg>
<div class="nd" style="left:488.30px;top:664.10px;width:279.60px;height:227.00px;"></div>
<div class="hd" style="left:489.30px;top:665.10px;width:279.60px;height:31.50px;background:#2e546c;"></div>
<svg class="ic" style="left:500.20px;top:673.30px;" width="14.7" height="14.7" viewBox="0 0 24 24" fill="none" stroke="#ffffff" stroke-width="2" stroke-linecap="round" stroke-linejoin="round"><path d="M4 20h16"/><path d="m6 16 6-12 6 12"/><path d="M8 12h8"/></svg>
<div class="t" style="left:523.00px;top:674.69px;height:14px;line-height:14px;color:#efefef;font-size:10px;letter-spacing:0.22px;">MergeTexts_1</div>
<svg class="ic" style="left:742.60px;top:672.10px;" width="14.4" height="14.4" viewBox="0 0 24 24" fill="none" stroke="rgba(255,255,255,0.6)" stroke-width="2" stroke-linecap="round" stroke-linejoin="round"><rect width="18" height="18" x="3" y="3" rx="2"/><path d="m9 8 6 4-6 4Z"/></svg>
<div class="bx" style="left:517.00px;top:702.10px;width:223.90px;height:27.40px;border-radius:5px;"></div>
<svg class="ic" style="left:498.00px;top:707.10px;" width="15.5" height="15.5"><circle cx="7.75" cy="7.75" r="5.100" fill="none" stroke="#0b89d3" stroke-width="1.3"/></svg>
<div class="t" style="left:524.00px;top:709.49px;height:14px;line-height:14px;color:#9a9a9a;font-size:10px;letter-spacing:0.1px;">input_1</div>
<div class="t" style="left:574.00px;top:709.49px;height:14px;line-height:14px;color:#e4e4e4;font-size:10px;letter-spacing:0.06px;width:160.00px;text-align:right;">rewrite this in english</div>
<div class="bx" style="left:517.00px;top:732.42px;width:223.90px;height:27.40px;border-radius:5px;"></div>
<svg class="ic" style="left:498.00px;top:737.42px;" width="15.5" height="15.5"><circle cx="7.75" cy="7.75" r="5.75" fill="#0b89d3"/></svg>
<div class="t" style="left:524.00px;top:739.81px;height:14px;line-height:14px;color:#9a9a9a;font-size:10px;letter-spacing:0.1px;">input_2</div>
<div class="t" style="left:574.00px;top:739.81px;height:14px;line-height:14px;color:#8c8c8c;font-size:10px;letter-spacing:0.06px;width:160.00px;text-align:right;">Place your text here</div>
<div class="bx" style="left:517.00px;top:762.74px;width:223.90px;height:27.40px;border-radius:5px;"></div>
<svg class="ic" style="left:498.00px;top:767.74px;" width="15.5" height="15.5"><circle cx="7.75" cy="7.75" r="5.100" fill="none" stroke="#0b89d3" stroke-width="1.3"/></svg>
<div class="t" style="left:524.00px;top:770.12px;height:14px;line-height:14px;color:#9a9a9a;font-size:10px;letter-spacing:0.1px;">input_3</div>
<div class="t" style="left:574.00px;top:770.12px;height:14px;line-height:14px;color:#8c8c8c;font-size:10px;letter-spacing:0.06px;width:160.00px;text-align:right;">Place your text here</div>
<div class="bx" style="left:517.00px;top:793.06px;width:223.90px;height:27.40px;border-radius:5px;"></div>
<svg class="ic" style="left:498.00px;top:798.06px;" width="15.5" height="15.5"><circle cx="7.75" cy="7.75" r="5.100" fill="none" stroke="#0b89d3" stroke-width="1.3"/></svg>
<div class="t" style="left:524.00px;top:800.45px;height:14px;line-height:14px;color:#9a9a9a;font-size:10px;letter-spacing:0.1px;">input_4</div>
<div class="t" style="left:574.00px;top:800.45px;height:14px;line-height:14px;color:#8c8c8c;font-size:10px;letter-spacing:0.06px;width:160.00px;text-align:right;">Place your text here</div>
<div class="bx" style="left:517.00px;top:823.38px;width:223.90px;height:27.40px;border-radius:5px;"></div>
<svg class="ic" style="left:498.00px;top:828.38px;" width="15.5" height="15.5"><circle cx="7.75" cy="7.75" r="5.100" fill="none" stroke="#0b89d3" stroke-width="1.3"/></svg>
<div class="t" style="left:524.00px;top:830.76px;height:14px;line-height:14px;color:#9a9a9a;font-size:10px;letter-spacing:0.1px;">merge_string</div>
<div class="t" style="left:574.00px;top:830.76px;height:14px;line-height:14px;color:#e4e4e4;font-size:10px;letter-spacing:0.06px;width:160.00px;text-align:right;">\n\n</div>
<div class="bx" style="left:517.00px;top:853.70px;width:223.90px;height:27.40px;border-radius:5px;"></div>
<div class="t" style="left:524.00px;top:861.09px;height:14px;line-height:14px;color:#9a9a9a;font-size:10px;letter-spacing:0.1px;">output</div>
<div class="t" style="left:574.00px;top:861.09px;height:14px;line-height:14px;color:#5c5c5c;font-size:10px;letter-spacing:0.06px;width:160.00px;text-align:right;">Place your text here</div>
<svg class="ic" style="left:744.35px;top:858.25px;" width="15.5" height="15.5"><circle cx="7.75" cy="7.75" r="5.75" fill="#0b89d3"/></svg>
<div class="nd" style="left:1328.20px;top:405.30px;width:349.20px;height:244.20px;"></div>
<div class="hd" style="left:1329.20px;top:406.30px;width:349.20px;height:31.50px;background:#2e546c;"></div>
<svg class="ic" style="left:1340.10px;top:414.50px;" width="14.7" height="14.7" viewBox="0 0 24 24" fill="none" stroke="#ffffff" stroke-width="2" stroke-linecap="round" stroke-linejoin="round"><path d="M4 20h16"/><path d="m6 16 6-12 6 12"/><path d="M8 12h8"/></svg>
<div class="t" style="left:1362.90px;top:415.89px;height:14px;line-height:14px;color:#efefef;font-size:10px;letter-spacing:0.22px;">MergeTexts_2</div>
<svg class="ic" style="left:1652.10px;top:413.30px;" width="14.4" height="14.4" viewBox="0 0 24 24" fill="none" stroke="rgba(255,255,255,0.6)" stroke-width="2" stroke-linecap="round" stroke-linejoin="round"><rect width="18" height="18" x="3" y="3" rx="2"/><path d="m9 8 6 4-6 4Z"/></svg>
<div class="bx" style="left:1356.90px;top:443.30px;width:293.50px;height:27.40px;border-radius:5px;"></div>
<svg class="ic" style="left:1337.90px;top:448.30px;" width="15.5" height="15.5"><circle cx="7.75" cy="7.75" r="5.100" fill="none" stroke="#0b89d3" stroke-width="1.3"/></svg>
<div class="t" style="left:1363.90px;top:450.69px;height:14px;line-height:14px;color:#9a9a9a;font-size:10px;letter-spacing:0.1px;">input_1</div>
<div class="t" style="left:1483.50px;top:450.69px;height:14px;line-height:14px;color:#e4e4e4;font-size:10px;letter-spacing:0.06px;width:160.00px;text-align:right;">Summarize both these stories:</div>
<div class="bx" style="left:1356.90px;top:473.62px;width:293.50px;height:27.40px;border-radius:5px;"></div>
<svg class="ic" style="left:1337.90px;top:478.62px;" width="15.5" height="15.5"><circle cx="7.75" cy="7.75" r="5.75" fill="#0b89d3"/></svg>
<div class="t" style="left:1363.90px;top:481.01px;height:14px;line-height:14px;color:#9a9a9a;font-size:10px;letter-spacing:0.1px;">input_2</div>
<div class="t" style="left:1483.50px;top:481.01px;height:14px;line-height:14px;color:#8c8c8c;font-size:10px;letter-spacing:0.06px;width:160.00px;text-align:right;">Place your text here</div>
<div class="bx" style="left:1356.90px;top:503.94px;width:293.50px;height:27.40px;border-radius:5px;"></div>
<svg class="ic" style="left:1337.90px;top:508.94px;" width="15.5" height="15.5"><circle cx="7.75" cy="7.75" r="5.75" fill="#0b89d3"/></svg>
<div class="t" style="left:1363.90px;top:511.33px;height:14px;line-height:14px;color:#9a9a9a;font-size:10px;letter-spacing:0.1px;">input_3</div>
<div class="t" style="left:1483.50px;top:511.33px;height:14px;line-height:14px;color:#8c8c8c;font-size:10px;letter-spacing:0.06px;width:160.00px;text-align:right;">Place your text here</div>
<div class="bx" style="left:1356.90px;top:534.26px;width:293.50px;height:27.40px;border-radius:5px;"></div>
<svg class="ic" style="left:1337.90px;top:539.26px;" width="15.5" height="15.5"><circle cx="7.75" cy="7.75" r="5.100" fill="none" stroke="#0b89d3" stroke-width="1.3"/></svg>
<div class="t" style="left:1363.90px;top:541.64px;height:14px;line-height:14px;color:#9a9a9a;font-size:10px;letter-spacing:0.1px;">input_4</div>
<div class="t" style="left:1483.50px;top:541.64px;height:14px;line-height:14px;color:#8c8c8c;font-size:10px;letter-spacing:0.06px;width:160.00px;text-align:right;">Place your text here</div>
<div class="bx" style="left:1356.90px;top:564.58px;width:293.50px;height:27.40px;border-radius:5px;"></div>
<svg class="ic" style="left:1337.90px;top:569.58px;" width="15.5" height="15.5"><circle cx="7.75" cy="7.75" r="5.100" fill="none" stroke="#0b89d3" stroke-width="1.3"/></svg>
<div class="t" style="left:1363.90px;top:571.97px;height:14px;line-height:14px;color:#9a9a9a;font-size:10px;letter-spacing:0.1px;">merge_string</div>
<div class="t" style="left:1483.50px;top:571.97px;height:14px;line-height:14px;color:#e4e4e4;font-size:10px;letter-spacing:0.06px;width:160.00px;text-align:right;">\n\n</div>
<div class="bx" style="left:1356.90px;top:594.90px;width:293.50px;height:27.40px;border-radius:5px;"></div>
<div class="t" style="left:1363.90px;top:602.28px;height:14px;line-height:14px;color:#9a9a9a;font-size:10px;letter-spacing:0.1px;">output</div>
<div class="t" style="left:1483.50px;top:602.28px;height:14px;line-height:14px;color:#5c5c5c;font-size:10px;letter-spacing:0.06px;width:160.00px;text-align:right;">Place your text here</div>
<svg class="ic" style="left:1653.85px;top:599.45px;" width="15.5" height="15.5"><circle cx="7.75" cy="7.75" r="5.75" fill="#0b89d3"/></svg>
<div class="nd" style="left:1328.10px;top:209.20px;width:349.20px;height:174.60px;"></div>
<div class="hd" style="left:1329.10px;top:210.20px;width:349.20px;height:31.30px;background:#2e546c;"></div>
<svg class="ic" style="left:1340.00px;top:218.40px;" width="14.7" height="14.7" viewBox="0 0 24 24" fill="none" stroke="#ffffff" stroke-width="2" stroke-linecap="round" stroke-linejoin="round"><path d="M4 20h16"/><path d="m6 16 6-12 6 12"/><path d="M8 12h8"/></svg>
<div class="t" style="left:1362.80px;top:219.18px;height:14px;line-height:14px;color:#efefef;font-size:10px;letter-spacing:0.22px;">english_story</div>
<svg class="ic" style="left:1652.00px;top:217.20px;" width="14.4" height="14.4" viewBox="0 0 24 24" fill="none" stroke="rgba(255,255,255,0.6)" stroke-width="2" stroke-linecap="round" stroke-linejoin="round"><rect width="18" height="18" x="3" y="3" rx="2"/><path d="m9 8 6 4-6 4Z"/></svg>
<div class="bx" style="left:1357.00px;top:246.85px;width:293.20px;height:126.15px;border-radius:5px;"></div>
<svg class="ic" style="left:1337.75px;top:252.15px;" width="15.5" height="15.5"><circle cx="7.75" cy="7.75" r="5.75" fill="#0b89d3"/></svg>
<svg class="ic" style="left:1654.25px;top:252.15px;" width="15.5" height="15.5"><circle cx="7.75" cy="7.75" r="5.100" fill="none" stroke="#0b89d3" stroke-width="1.3"/></svg>
<div class="t" style="left:1363.70px;top:252.28px;height:14px;line-height:14px;color:#9a9a9a;font-size:10px;letter-spacing:0.1px;">text</div>
<div class="t" style="left:1363.70px;top:275.04px;height:14px;line-height:14px;color:#8c8c8c;font-size:10px;letter-spacing:0.03px;">Place your text here</div>
<div class="nd" style="left:1328.20px;top:664.20px;width:349.20px;height:174.80px;"></div>
<div class="hd" style="left:1329.20px;top:665.20px;width:349.20px;height:31.30px;background:#2e546c;"></div>
<svg class="ic" style="left:1340.10px;top:673.40px;" width="14.7" height="14.7" viewBox="0 0 24 24" fill="none" stroke="#ffffff" stroke-width="2" stroke-linecap="round" stroke-linejoin="round"><path d="M4 20h16"/><path d="m6 16 6-12 6 12"/><path d="M8 12h8"/></svg>
<div class="t" style="left:1362.90px;top:674.19px;height:14px;line-height:14px;color:#efefef;font-size:10px;letter-spacing:0.22px;">DisplayText_1</div>
<svg class="ic" style="left:1652.10px;top:672.20px;" width="14.4" height="14.4" viewBox="0 0 24 24" fill="none" stroke="rgba(255,255,255,0.6)" stroke-width="2" stroke-linecap="round" stroke-linejoin="round"><rect width="18" height="18" x="3" y="3" rx="2"/><path d="m9 8 6 4-6 4Z"/></svg>
<div class="bx" style="left:1357.10px;top:701.85px;width:293.20px;height:126.15px;border-radius:5px;"></div>
<svg class="ic" style="left:1337.85px;top:707.15px;" width="15.5" height="15.5"><circle cx="7.75" cy="7.75" r="5.75" fill="#0b89d3"/></svg>
<svg class="ic" style="left:1654.35px;top:707.15px;" width="15.5" height="15.5"><circle cx="7.75" cy="7.75" r="5.100" fill="none" stroke="#0b89d3" stroke-width="1.3"/></svg>
<div class="t" style="left:1363.80px;top:707.29px;height:14px;line-height:14px;color:#9a9a9a;font-size:10px;letter-spacing:0.1px;">text</div>
<div class="t" style="left:1363.80px;top:730.04px;height:14px;line-height:14px;color:#8c8c8c;font-size:10px;letter-spacing:0.03px;">Place your text here</div>
<div class="nd" style="left:2132.60px;top:383.80px;width:349.20px;height:350.10px;"></div>
<div class="hd" style="left:2133.60px;top:384.80px;width:349.20px;height:31.30px;background:#2e546c;"></div>
<svg class="ic" style="left:2144.50px;top:393.00px;" width="14.7" height="14.7" viewBox="0 0 24 24" fill="none" stroke="#ffffff" stroke-width="2" stroke-linecap="round" stroke-linejoin="round"><path d="M4 20h16"/><path d="m6 16 6-12 6 12"/><path d="M8 12h8"/></svg>
<div class="t" style="left:2167.30px;top:393.79px;height:14px;line-height:14px;color:#efefef;font-size:10px;letter-spacing:0.22px;">DisplayText_2</div>
<svg class="ic" style="left:2456.50px;top:391.80px;" width="14.4" height="14.4" viewBox="0 0 24 24" fill="none" stroke="rgba(255,255,255,0.6)" stroke-width="2" stroke-linecap="round" stroke-linejoin="round"><rect width="18" height="18" x="3" y="3" rx="2"/><path d="m9 8 6 4-6 4Z"/></svg>
<div class="bx" style="left:2161.50px;top:421.45px;width:293.20px;height:301.15px;border-radius:5px;"></div>
<svg class="ic" style="left:2142.25px;top:426.75px;" width="15.5" height="15.5"><circle cx="7.75" cy="7.75" r="5.75" fill="#0b89d3"/></svg>
<svg class="ic" style="left:2458.75px;top:426.75px;" width="15.5" height="15.5"><circle cx="7.75" cy="7.75" r="5.100" fill="none" stroke="#0b89d3" stroke-width="1.3"/></svg>
<div class="t" style="left:2168.20px;top:426.89px;height:14px;line-height:14px;color:#9a9a9a;font-size:10px;letter-spacing:0.1px;">text</div>
<div class="t" style="left:2168.20px;top:449.64px;height:14px;line-height:14px;color:#8c8c8c;font-size:10px;letter-spacing:0.03px;">Place your text here</div>
<div style="position:absolute;left:2506px;top:338px;width:7px;height:15px;background:#9aa3b0;border-radius:7.5px 0 0 7.5px;"></div>
</div></body></html>
